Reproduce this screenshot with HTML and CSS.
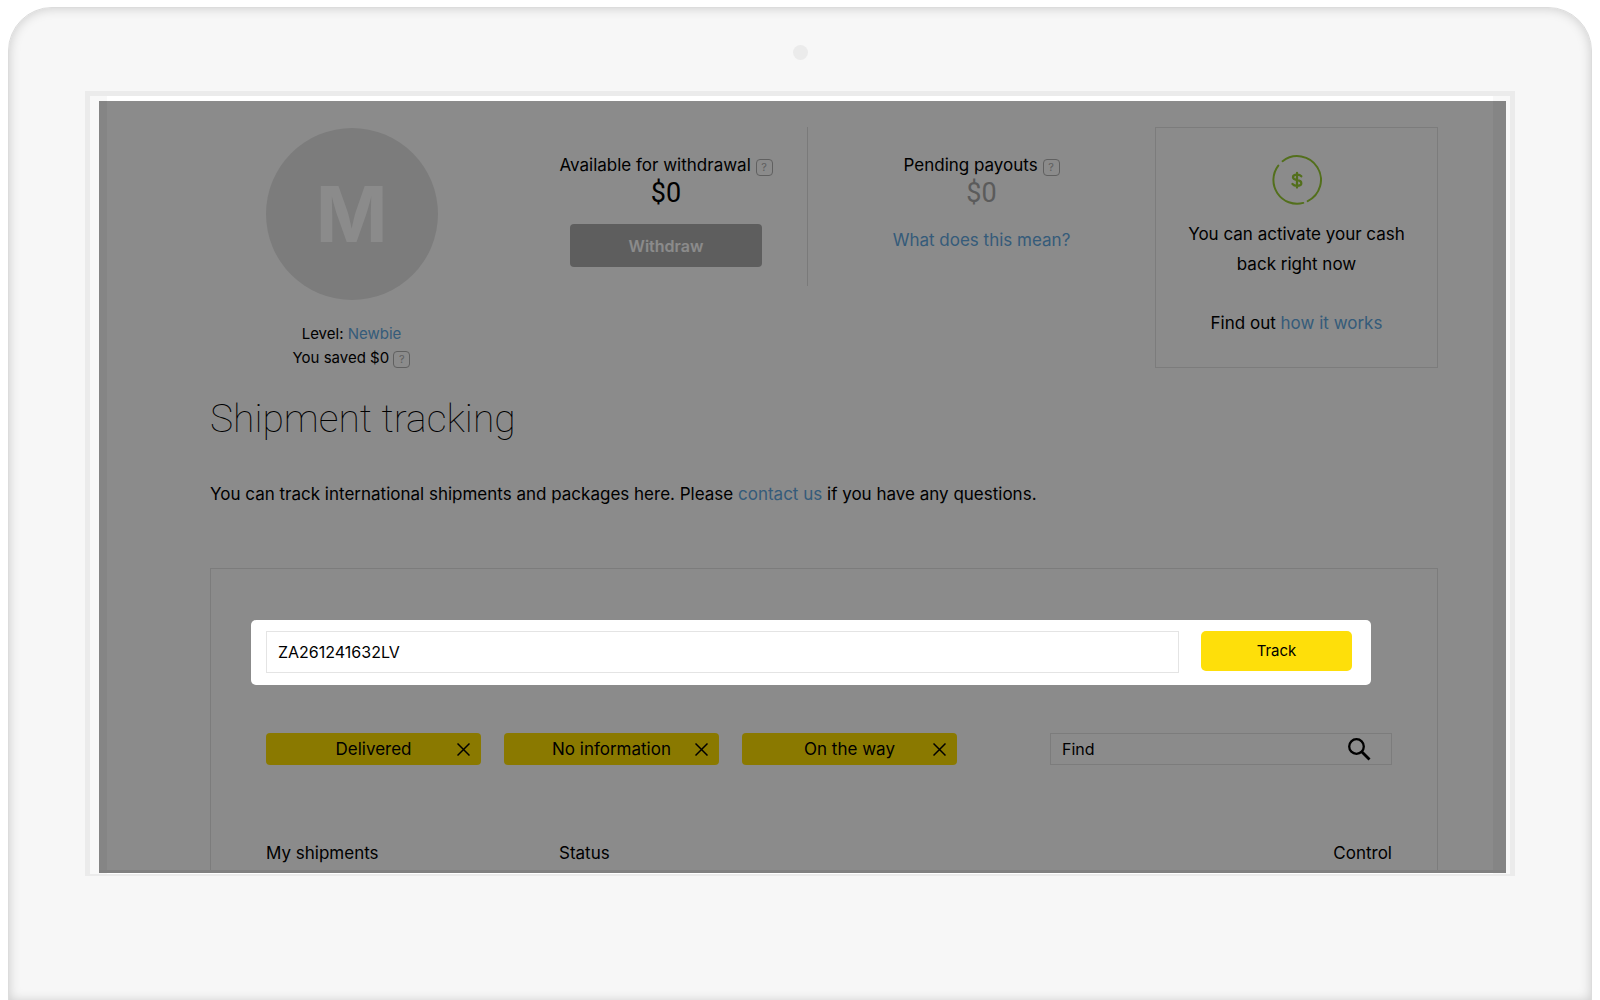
FILE: index.html
```html
<!DOCTYPE html>
<html lang="en">
<head>
<meta charset="utf-8">
<title>Shipment tracking</title>
<link rel="stylesheet" href="styles.css">
</head>
<body>
<div class="device">
  <span class="camera"></span>
  <div class="bezel">
    <main class="screen">
      <section class="summary">
        <div class="profile">
          <div class="avatar">M</div>
          <p>Level: <a href="#level">Newbie</a></p>
          <p>You saved $0 <button class="help" type="button" aria-label="About savings">?</button></p>
        </div>
        <div class="balance balance-available">
          <h2>Available for withdrawal <button class="help" type="button" aria-label="About withdrawal">?</button></h2>
          <p class="amount">$0</p>
          <button class="withdraw" type="button">Withdraw</button>
        </div>
        <div class="balance">
          <h2>Pending payouts <button class="help" type="button" aria-label="About payouts">?</button></h2>
          <p class="amount amount-muted">$0</p>
          <a class="explain" href="#payouts">What does this mean?</a>
        </div>
        <aside class="cashback">
          <svg width="50" height="50" viewBox="0 0 50 50" fill="none" stroke="#98cc35" stroke-width="2" stroke-linecap="round" aria-hidden="true">
            <path d="M10.600 6.200A23.700 23.700 0 1 1 35.700 46.100M31.300 47.900A23.700 23.700 0 0 1 6.300 10.600"/>
            <path stroke-width="2.300" d="M29.300 21.300Q28 19.700 25 19.700Q21 19.700 21 22.300Q21 24.300 25 25Q29.300 25.800 29.300 28.300Q29.300 30.900 25 30.900Q22 30.900 20.500 29M25 18V32.500"/>
          </svg>
          <p>You can activate your cash back right now</p>
          <p>Find out <a href="#cashback">how it works</a></p>
        </aside>
      </section>
      <h1>Shipment tracking</h1>
      <p class="intro">You can track international shipments and packages here. Please <a href="#contact">contact us</a> if you have any questions.</p>
      <section class="panel">
        <form class="spotlight">
          <input class="field code" type="text" value="ZA261241632LV" aria-label="Tracking number">
          <button class="track" type="submit">Track</button>
        </form>
        <div class="filters">
          <button class="tag" type="button"><span>Delivered</span><svg width="13" height="13" viewBox="0 0 13 13" aria-hidden="true"><path d="M.5.5l12 12M12.500.5l-12 12"/></svg></button>
          <button class="tag" type="button"><span>No information</span><svg width="13" height="13" viewBox="0 0 13 13" aria-hidden="true"><path d="M.5.5l12 12M12.500.5l-12 12"/></svg></button>
          <button class="tag" type="button"><span>On the way</span><svg width="13" height="13" viewBox="0 0 13 13" aria-hidden="true"><path d="M.5.5l12 12M12.500.5l-12 12"/></svg></button>
          <div class="field search">
            <input type="text" value="Find" aria-label="Find">
            <svg width="24" height="24" viewBox="0 0 24 24" fill="none" stroke="#000" aria-hidden="true"><circle cx="9.500" cy="9.500" r="7.300" stroke-width="2.300"/><path stroke-width="2.800" d="M14.500 14.500L22.500 22.500"/></svg>
          </div>
        </div>
        <table class="shipments">
          <thead><tr><th class="col-name">My shipments</th><th>Status</th><th class="col-control">Control</th></tr></thead>
        </table>
      </section>
    </main>
  </div>
</div>
</body>
</html>
```
FILE: styles.css
```css
* { box-sizing: border-box; }

body {
  margin: 0;
  background: #fff;
  color: #000;
  font: 17px/24px Inter, sans-serif;
}

h1, h2, p { margin: 0; font-weight: 400; }
button, input { font: inherit; color: inherit; }
button { border: 0; padding: 0; }
a { color: #62a8e0; text-decoration: none; }

.device {
  display: flex;
  flex-direction: column;
  align-items: center;
  min-height: calc(100vh - 7px);
  margin: 7px 8px 0;
  padding: 37px 76px 125px;
  border: 1px solid #dcdcdc;
  border-radius: 44px 44px 0 0;
  background: #f7f7f7;
  box-shadow: inset 0 0 12px rgba(0, 0, 0, .18);
}

.camera {
  width: 15px;
  height: 15px;
  margin-bottom: 31px;
  border-radius: 50%;
  background: #ebebeb;
}

.bezel {
  width: 100%;
  padding: 5px 4px 1px 9px;
  border: 5px solid #ebebeb;
  border-bottom-width: 2px;
  background: linear-gradient(90deg, #f8f8f8 17px, #fff 17px calc(100% - 17px), #f8f8f8 calc(100% - 17px));
}

.screen {
  overflow: hidden;
  padding: 26px 68px 3px 111px;
  background:
    linear-gradient(#ebebeb, #ebebeb) bottom / 100% 3px no-repeat,
    linear-gradient(90deg, #f5f5f5 8px, #fff 8px calc(100% - 13px), #f5f5f5 calc(100% - 13px));
}

.summary {
  display: grid;
  grid-template-columns: repeat(4, minmax(0, 1fr));
  gap: 32px;
  align-items: start;
  text-align: center;
}

.avatar {
  width: 172px;
  height: 172px;
  margin: 1px auto 22px;
  border-radius: 50%;
  background: #e4e4e4;
  color: #fff;
  font: 700 77px/172px Inter, sans-serif;
}

.profile { font-size: 15px; }

.help {
  width: 17px;
  height: 17px;
  border: 1px solid #b0b0b0;
  border-radius: 4px;
  background: none;
  color: #b0b0b0;
  font-size: 11px;
  line-height: 15px;
  vertical-align: 0;
}

.balance {
  min-height: 159px;
  padding-top: 26px;
}

.balance-available { border-right: 1px solid #e0e0e0; }
.balance h2 { font-size: 17px; line-height: 24px; }

.amount { font: 27px/32px Roboto, sans-serif; }
.amount-muted { color: #a8a8a8; }

.withdraw {
  width: 192px;
  height: 43px;
  margin-top: 15px;
  border-radius: 4px;
  background: #adadad;
  color: #fff;
  font-size: 16px;
  font-weight: 600;
}

.explain { display: block; margin-top: 19px; }

.cashback {
  padding: 27px 24px 29px;
  border: 1px solid #e4e4e4;
  line-height: 30px;
}

.cashback svg { display: block; margin: 0 auto 14px; }
.cashback p + p { margin-top: 29px; }

h1 {
  margin-top: 26px;
  font: 100 39px/46px Roboto, sans-serif;
}

.intro { margin-top: 40px; }

.panel {
  margin-top: 62px;
  padding: 51px 45px 5px 55px;
  border: 1px solid #e4e4e4;
  border-bottom: 0;
}

/* The highlighted form dims the rest of the screen. */
.spotlight {
  position: relative;
  z-index: 1;
  display: flex;
  gap: 22px;
  margin: 0 21px 0 -15px;
  padding: 11px 19px 12px 15px;
  border-radius: 5px;
  background: #fff;
  box-shadow: 0 0 0 2000px rgba(0, 0, 0, .455);
}

.field {
  border: 1px solid #e4e4e4;
  border-radius: 0;
  background: none;
  font-size: 16px;
}

.code { flex: 1; min-width: 0; height: 42px; padding: 0 11px; }

.track {
  width: 151px;
  height: 40px;
  border-radius: 5px;
  background: #fedf0a;
  font-size: 15px;
}

.filters {
  display: flex;
  gap: 23px;
  margin-top: 48px;
}

.tag {
  display: flex;
  align-items: center;
  width: 215px;
  height: 32px;
  padding: 0 11px 0 24px;
  border-radius: 4px;
  background: #fedf00;
}

.tag span { flex: 1; }
.tag svg { stroke: #000; stroke-width: 1.5; }

.search {
  display: flex;
  align-items: center;
  width: 342px;
  height: 32px;
  margin-left: auto;
  padding: 0 20px 0 11px;
}

.search input { flex: 1; min-width: 0; padding: 0; border: 0; background: none; }

.shipments {
  width: 100%;
  margin-top: 76px;
  border-collapse: collapse;
  table-layout: fixed;
}

.shipments th { padding: 0; font-weight: 400; text-align: left; }
.shipments .col-name { width: 293px; }
.shipments .col-control { text-align: right; }
```
